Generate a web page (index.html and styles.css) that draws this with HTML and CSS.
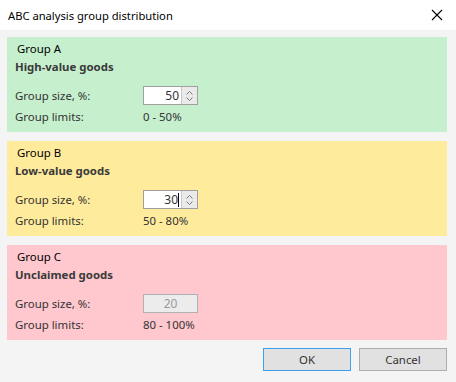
FILE: index.html
```html
<!DOCTYPE html>
<html>
<head>
<meta charset="utf-8">
<link rel="stylesheet" href="styles.css">
</head>
<body>
<div class="dialog">
  <div class="titlebar">
    <span class="title">ABC analysis group distribution</span>
    <svg class="close" width="12" height="12" viewBox="0 0 12 12"><path d="M1 1L11 11M11 1L1 11" stroke="#000" stroke-width="1.1" fill="none"/></svg>
  </div>
  <div class="content">
    <div class="group green">
      <div class="caption">Group A</div>
      <div class="name">High-value goods</div>
      <div class="row">
        <span class="label">Group size, %:</span>
        <div class="spin">
          <span class="val">50</span>
          <span class="arrows">
            <svg width="9" height="6" viewBox="0 0 9 6"><path d="M1.5 4.5L4.5 1.5L7.5 4.5" stroke="#777" stroke-width="1" fill="none"/></svg>
            <svg width="9" height="6" viewBox="0 0 9 6"><path d="M1.5 1.5L4.5 4.5L7.5 1.5" stroke="#777" stroke-width="1" fill="none"/></svg>
          </span>
        </div>
      </div>
      <div class="row lim">
        <span class="label">Group limits:</span>
        <span class="value">0 - 50%</span>
      </div>
    </div>
    <div class="group yellow">
      <div class="caption">Group B</div>
      <div class="name">Low-value goods</div>
      <div class="row">
        <span class="label">Group size, %:</span>
        <div class="spin">
          <span class="val">30<i class="caret"></i></span>
          <span class="arrows">
            <svg width="9" height="6" viewBox="0 0 9 6"><path d="M1.5 4.5L4.5 1.5L7.5 4.5" stroke="#777" stroke-width="1" fill="none"/></svg>
            <svg width="9" height="6" viewBox="0 0 9 6"><path d="M1.5 1.5L4.5 4.5L7.5 1.5" stroke="#777" stroke-width="1" fill="none"/></svg>
          </span>
        </div>
      </div>
      <div class="row lim">
        <span class="label">Group limits:</span>
        <span class="value">50 - 80%</span>
      </div>
    </div>
    <div class="group red">
      <div class="caption">Group C</div>
      <div class="name">Unclaimed goods</div>
      <div class="row">
        <span class="label">Group size, %:</span>
        <div class="spin disabled">
          <span class="val">20</span>
        </div>
      </div>
      <div class="row lim">
        <span class="label">Group limits:</span>
        <span class="value">80 - 100%</span>
      </div>
    </div>
  </div>
  <div class="buttons">
    <button class="btn default">OK</button>
    <button class="btn">Cancel</button>
  </div>
</div>
</body>
</html>
```
FILE: styles.css
```css
* { box-sizing: border-box; }
html, body { margin: 0; padding: 0; }
body {
  width: 456px;
  height: 382px;
  background: #f4f4f4;
  font-family: "Noto Sans", "Open Sans", sans-serif;
  font-size: 11.4px;
  color: #333;
  overflow: hidden;
}
.dialog { width: 456px; height: 382px; display: flex; flex-direction: column; }
.titlebar {
  height: 30px;
  background: #fff;
  display: flex;
  align-items: center;
  justify-content: space-between;
  padding: 0 13px 0 8px;
}
.title { color: #000; font-size: 11.2px; }
.close { display: block; }
.content {
  padding: 7px 9px 0 7px;
  display: flex;
  flex-direction: column;
  gap: 9px;
}
.group {
  height: 95px;
  padding: 4px 8px 0 8px;
}
.green { background: #c6efce; }
.yellow { background: #ffeb9c; }
.red { background: #ffc7ce; }
.caption { color: #000; height: 16px; line-height: 16px; padding-left: 2px; }
.name { font-weight: bold; height: 16px; line-height: 16px; margin-top: 2px; color: #3a3a3a; }
.row { display: flex; align-items: center; }
.row:not(.lim) { margin-top: 11px; height: 19px; }
.lim { height: 16px; line-height: 16px; margin-top: 4px; }
.label { width: 128px; }
.spin {
  width: 55px;
  height: 19px;
  border: 1px solid #a0a0a0;
  background: #fff;
  display: flex;
}
.spin .val {
  flex: 1;
  text-align: right;
  padding-right: 2px;
  line-height: 17px;
  color: #333;
  font-size: 12px;
}
.caret {
  display: inline-block;
  width: 1px;
  height: 14px;
  background: #000;
  vertical-align: -3px;
}
.arrows {
  width: 16px;
  background: #eaeaea;
  border-left: 1px solid #c8c8c8;
  display: flex;
  flex-direction: column;
  align-items: center;
  justify-content: center;
}
.arrows svg { display: block; }
.spin.disabled { background: #ececec; border-color: #b0b0b0; }
.spin.disabled .val { text-align: center; color: #9a9a9a; padding-right: 0; }
.buttons {
  display: flex;
  justify-content: flex-end;
  gap: 8px;
  padding: 8px 9px 0 0;
}
.btn {
  width: 88px;
  height: 23px;
  border: 1px solid #adadad;
  background: #e1e1e1;
  font-family: inherit;
  font-size: 11.4px;
  color: #333;
  padding: 0;
}
.btn.default { border-color: #3c9ff0; }
```
